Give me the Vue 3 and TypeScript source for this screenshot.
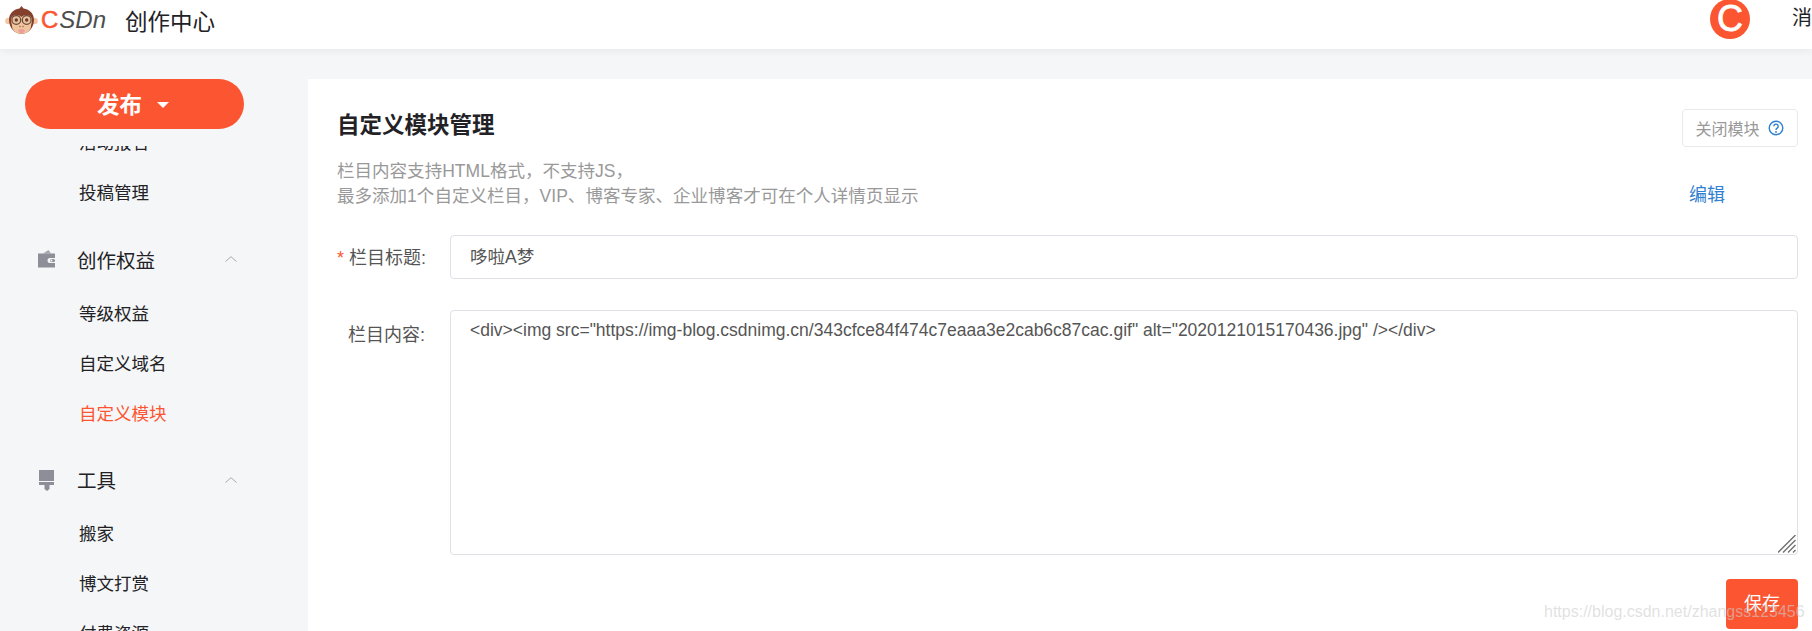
<script setup lang="ts">
interface Group { title: string; icon?: 'wallet' | 'brush'; items: { label: string; active?: boolean }[] }
const groups: Group[] = [
  { title: '', items: [{ label: '活动报名' }, { label: '投稿管理' }] },
  { title: '创作权益', icon: 'wallet', items: [{ label: '等级权益' }, { label: '自定义域名' }, { label: '自定义模块', active: true }] },
  { title: '工具', icon: 'brush', items: [{ label: '搬家' }, { label: '博文打赏' }, { label: '付费资源' }] },
]
const content = '<div><img src="https://img-blog.csdnimg.cn/343cfce84f474c7eaaa3e2cab6c87cac.gif" alt="2020121015170436.jpg" /></div>'
</script>

<template>
  <div class="page">
    <header class="top">
      <div class="brand">
        <svg class="monkey" width="33" height="28" viewBox="0 0 33 28">
          <circle cx="3.500" cy="15" r="3.300" fill="#f2c6a0" />
          <circle cx="29.500" cy="15" r="3.300" fill="#f2c6a0" />
          <path d="M16.500 0l2 2.400c6.500.8 10.500 5.600 10.500 11.600 0 7.600-5.600 13.800-12.500 13.800S4 21.600 4 14C4 8 8 3.200 14.500 2.400z" fill="#84402c" />
          <path d="M6 14c0-3 2.800-5 5.500-5 2 0 3.700.8 5 1.900 1.300-1.100 3-1.900 5-1.900 2.700 0 5.500 2 5.500 5 0 3-1 4.300-1 5.800 0 4.500-4 8-9.500 8s-9.500-3.500-9.500-8C7 18.300 6 17 6 14z" fill="#f0c49c" />
          <circle cx="11.300" cy="14" r="4.400" fill="#e8c3a0" stroke="#6d4a3a" stroke-width="1.300" />
          <circle cx="21.700" cy="14" r="4.400" fill="#e8c3a0" stroke="#6d4a3a" stroke-width="1.300" />
          <circle cx="11.300" cy="14" r="1.700" fill="#6b3a28" />
          <circle cx="21.700" cy="14" r="1.700" fill="#6b3a28" />
          <circle cx="15" cy="20.500" r=".7" fill="#8a5a44" />
          <circle cx="18" cy="20.500" r=".7" fill="#8a5a44" />
          <ellipse cx="16.500" cy="25" rx="3.200" ry="1.900" fill="#ee9c9c" />
        </svg>
        <span class="logo"><span class="logo-c">C</span><span class="logo-rest">SDn</span></span>
        <span class="center-name">创作中心</span>
      </div>
      <div class="user">
        <span class="avatar">C</span>
        <span class="msg">消息</span>
      </div>
    </header>

    <div class="body">
      <aside class="side">
        <div class="publish-wrap">
          <button class="publish"><span>发布</span><i class="caret"></i></button>
        </div>
        <nav class="nav">
          <div class="nav-inner">
            <section v-for="g in groups" :key="g.title" class="group">
              <div v-if="g.title" class="group-title">
                <svg v-if="g.icon === 'wallet'" class="gicon" width="20" height="18" viewBox="0 0 20 18">
                  <path d="M6 3.500 11.500 0 14 3.500z" fill="#a6a6ae" />
                  <path d="M1 3.500h17v4.500h-5a2.500 2.500 0 0 0 0 5h5v4.500H1z" fill="#8e8e98" />
                  <rect x="13" y="9" width="5" height="3" rx="1.500" fill="#8e8e98" />
                  <circle cx="14.500" cy="10.500" r="1" fill="#f5f6f7" />
                </svg>
                <svg v-else class="gicon" width="20" height="22" viewBox="0 0 20 22">
                  <rect x="2" y="1" width="15" height="11" fill="#8e8e98" />
                  <rect x="2" y="13" width="15" height="3" fill="#8e8e98" />
                  <path d="M7.500 16h5v4l-2.500 2-2.500-2z" fill="#8e8e98" />
                </svg>
                <span class="gname">{{ g.title }}</span>
                <svg class="chev" width="12" height="6" viewBox="0 0 12 6"><path d="M.5 5.500 6 .7l5.500 4.800" fill="none" stroke="#a8a8b0" stroke-width="1" /></svg>
              </div>
              <a v-for="it in g.items" :key="it.label" class="item" :class="{ active: it.active }">{{ it.label }}</a>
            </section>
          </div>
        </nav>
      </aside>

      <main class="main">
        <div class="head">
          <h1>自定义模块管理</h1>
          <button class="close">关闭模块
            <svg width="16" height="16" viewBox="0 0 16 16">
              <circle cx="8" cy="8" r="6.800" fill="none" stroke="#2f80d0" stroke-width="1.400" />
              <path d="M5.800 6.300a2.200 2.200 0 1 1 3.400 1.900c-.8.500-1.200.9-1.200 1.800" fill="none" stroke="#2f80d0" stroke-width="1.400" />
              <circle cx="8" cy="12" r=".9" fill="#2f80d0" />
            </svg>
          </button>
        </div>
        <div class="desc-row">
          <p class="desc">栏目内容支持HTML格式，不支持JS，<br />最多添加1个自定义栏目，VIP、博客专家、企业博客才可在个人详情页显示</p>
          <a class="edit">编辑</a>
        </div>
        <div class="row first">
          <label class="label"><em>*</em> 栏目标题:</label>
          <input class="field" value="哆啦A梦" />
        </div>
        <div class="row second">
          <label class="label lower">栏目内容:</label>
          <div class="area-wrap">
            <textarea class="field area" :value="content"></textarea>
            <svg class="grip" width="18" height="18" viewBox="0 0 18 18">
              <path d="M0 17.500 17.500 0M5 17.500 17.500 5M10 17.500l7.500-7.500M15 17.500l2.500-2.500" stroke="#707070" stroke-width="1.400" fill="none" />
            </svg>
          </div>
        </div>
        <div class="actions"><button class="save">保存</button></div>
      </main>
    </div>
    <span class="watermark">https://blog.csdn.net/zhangss123456</span>
  </div>
</template>

<style>
html, body { margin: 0; overflow: hidden; }
</style>

<style scoped>
.page {
  position: relative;
  height: 631px;
  overflow: hidden;
  display: flex;
  flex-direction: column;
  background: #f5f6f7;
  color: #222226;
  font-family: "Liberation Sans", "Noto Sans CJK SC", sans-serif;
}
.top {
  height: 49px;
  flex: none;
  display: flex;
  justify-content: space-between;
  background: #fff;
  box-shadow: 0 2px 8px rgba(0, 0, 0, .06);
  position: relative;
  z-index: 3;
}
.brand { display: flex; align-items: center; height: 39px; padding-left: 5px; }
.monkey { flex: none; }
.logo { font-size: 24px; margin-left: 3px; width: 84px; line-height: 1; white-space: nowrap; }
.logo-c { color: #fc5531; -webkit-text-stroke: .5px #fc5531; margin-right: 1px; }
.logo-rest { color: #4d4d4d; font-style: italic; }
.center-name { font-size: 22.500px; color: #222226; }
.user { display: flex; align-items: flex-start; height: 39px; overflow: hidden; }
.avatar {
  width: 40px; height: 40px; margin-top: -1px; border-radius: 50%;
  background: #fc5531; color: #fff; font-size: 36px; line-height: 40px;
  text-align: center; font-weight: 400; -webkit-text-stroke: .8px #fff;
}
.msg { font-size: 20px; line-height: 24px; margin: 6px -20px 0 42px; width: 40px; white-space: nowrap; }
.body { flex: 1; display: flex; min-height: 0; }
.side { width: 308px; flex: none; display: flex; flex-direction: column; min-height: 0; }
.publish-wrap { height: 97px; flex: none; padding: 30px 0 0 25px; box-sizing: border-box; }
.publish {
  width: 219px; height: 50px; border: 0; border-radius: 25px; background: #fc5531; color: #fff;
  font: 700 22.500px "Liberation Sans", "Noto Sans CJK SC", sans-serif;
  display: flex; align-items: center; justify-content: center; gap: 15px; padding: 0 3px 3px 0;
}
.caret { width: 0; height: 0; border: 6px solid transparent; border-top-color: #fff; border-bottom: 0; margin-top: 4px; }
.nav { flex: 1; overflow: hidden; min-height: 0; }
.nav-inner { margin-top: -28px; }
.group + .group { margin-top: 17px; }
.group-title { height: 50px; box-sizing: border-box; padding: 0 0 2px 37px; display: flex; align-items: center; margin-bottom: 3.500px; position: relative; }
.gicon { width: 20px; flex: none; }
.gname { font-size: 19.500px; margin-left: 20px; }
.chev { position: absolute; left: 225px; top: 21px; }
.item { display: block; height: 50px; line-height: 50px; padding-left: 79px; font-size: 17.500px; color: #222226; }
.item.active { color: #fc5531; }
.main { flex: 1; margin-top: 30px; background: #fff; padding: 30px 14px 0 29px; min-width: 0; position: relative; }
.head { display: flex; justify-content: space-between; align-items: flex-start; height: 38px; }
h1 { margin: 0; font-size: 22.500px; line-height: 34px; font-weight: 700; color: #222226; }
.close {
  width: 116px; height: 38px; box-sizing: border-box; background: #fff; border: 1px solid #e8e8ed; border-radius: 4px;
  color: #999; font: 16px "Liberation Sans", "Noto Sans CJK SC", sans-serif;
  display: flex; align-items: center; justify-content: center; gap: 8px; padding: 0 1px 0 0;
}
.desc-row { display: flex; justify-content: space-between; align-items: flex-end; margin-top: 11.500px; padding-right: 73px; }
.desc { margin: 0; font-size: 17.550px; line-height: 25px; color: #999; }
.edit { color: #2f80d0; font-size: 18px; line-height: 25px; padding-bottom: 1px; }
.row { display: flex; }
.row.first { margin-top: 26.500px; align-items: center; }
.row.second { margin-top: 31px; }
.label { width: 88px; margin-right: 25px; flex: none; text-align: right; font-size: 18px; color: #555; white-space: nowrap; padding-bottom: 3px; }
.label em { color: #fc5531; font-style: normal; }
.label.lower { padding-top: 10px; }
.field {
  flex: 1; min-width: 0; box-sizing: border-box; height: 44px; border: 1px solid #e0e0e6; border-radius: 4px; padding: 0 19px 3px;
  font: 17.500px "Liberation Sans", "Noto Sans CJK SC", sans-serif; color: #555; background: #fff; outline: 0;
}
.area-wrap { flex: 1; min-width: 0; display: flex; position: relative; }
.area { height: 245px; padding: 9px 19px; line-height: 20px; resize: none; }
.grip { position: absolute; right: 2px; bottom: 2px; pointer-events: none; }
.actions { display: flex; justify-content: flex-end; margin-top: 24px; }
.save {
  width: 72px; height: 50px; border: 0; border-radius: 4px; background: #fc5531; color: #fff;
  font: 18px "Liberation Sans", "Noto Sans CJK SC", sans-serif; padding: 0 0 4px;
}
.watermark {
  position: absolute; left: 1544px; top: 602px; font-size: 16px; line-height: 20px;
  color: rgba(205, 205, 205, .6); white-space: nowrap; z-index: 4;
}
</style>
